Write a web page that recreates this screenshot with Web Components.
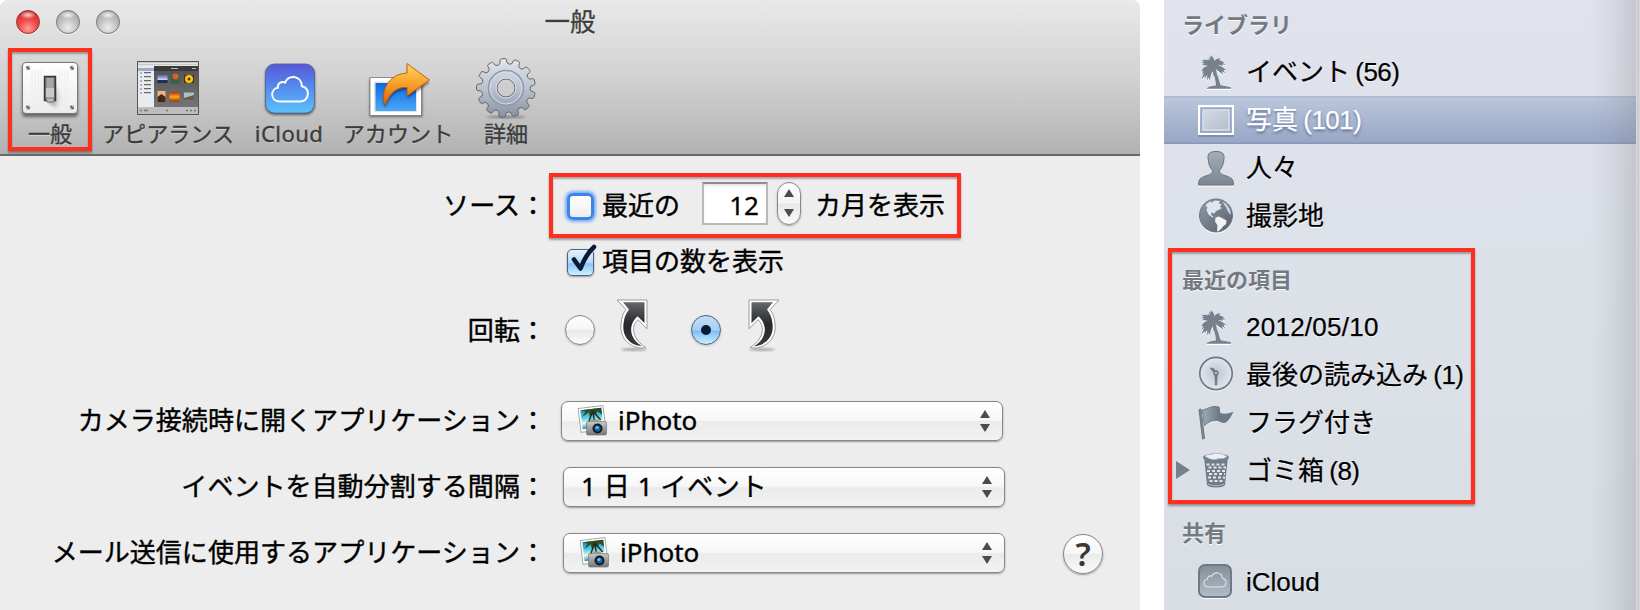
<!DOCTYPE html>
<html lang="ja">
<head>
<meta charset="utf-8">
<title>一般</title>
<style>
html,body{margin:0;padding:0;background:#fff}
body{width:1640px;height:610px;overflow:hidden;font-family:"Noto Sans","Noto Sans CJK JP",sans-serif}
</style>
</head>
<body>
<app-screen></app-screen>
<script>
const define=(name,html,after)=>customElements.define(name,class extends HTMLElement{
  connectedCallback(){
    if(this.shadowRoot)return;
    const t=document.createElement('template');
    t.innerHTML=typeof html==='function'?html(this):html;
    this.attachShadow({mode:'open'}).append(t.content.cloneNode(true));
    if(after)after(this);
  }
});

function gearPath(n,cx,cy,ro,ri){
  let d='';const s=2*Math.PI/n;
  for(let i=0;i<n;i++){
    const a=-Math.PI/2-0.1+i*s;
    const p=(r,o)=>(cx+r*Math.cos(a+o*s)).toFixed(2)+' '+(cy+r*Math.sin(a+o*s)).toFixed(2);
    d+=(i?'L':'M')+p(ri+.6,-.3)+'L'+p(ro-1.4,-.24)+'Q'+p(ro,-.22)+' '+p(ro,-.13)+'L'+p(ro,.13)+'Q'+p(ro,.22)+' '+p(ro-1.4,.24)+'L'+p(ri+.6,.3)+'Q'+p(ri-1.4,.5)+' '+p(ri+.6,.7);
  }
  return d+'Z';
}
const screw=(x,y)=>`<circle cx="${x}" cy="${y}" r="2.4" fill="#b4b4b4"/><path d="M${x-1.4} ${y-1.4}l2.8 2.8" stroke="#444" stroke-width="1.2"/>`;
const cloud='M10.5 38C4.5 38 1 34 1 29.5C1 24.5 4.500 21.500 8.500 21C8 15.500 13 12.500 18 14.500C20.500 9 25.500 7 30 7.500C36.500 8.500 40 13.500 40 19C45.500 20 48 24 48 28.500C48 34 44 38 38.500 38Z';
const palm=`<path d="M14 12C18 16 20 21 22.500 30.500C26 31 30 31.700 33 32.800V34H8.500C9 32.300 13 31 18 30.600C17.500 24 15.500 18 12.500 13Z"/>
<path d="M16.500 10C17 6 16 2.500 12.500 .5L13 3 10.800 2 12 5 9.500 4.500C10 8 12 10 15 12Z"/>
<path d="M15 10C11 5 7 4 3.500 6L6 6.700 3 8.300 6 8.500 4 10.500C8 10 11 11 14 13Z"/>
<path d="M15 11C9 10 4.500 12.500 3.500 17L5.500 16 3.500 20 6 18 3.500 24.500 7.500 21 6.500 24.500C9 20.500 12 16 16 13Z"/>
<path d="M12 13C9.500 17 8.500 21 9.500 26L10.800 22.500 12 26C12 21 14 17 16.500 13Z"/>
<path d="M14 12C15 15 15.500 18 15.500 21.500L17.500 18.500 18.500 20C19 16.500 18 13.500 16.500 11.500Z"/>
<path d="M15 11C17 14 20 16 25 20L24 16.500 27 18.500 25.500 15 28.500 15.500C24.500 11.500 20 9.500 15 10Z"/>
<path d="M14.500 11C17 6 22 4 27 8L24.500 7.800 27.500 10.500 24 9.500 25 11.500C21.500 9.500 19 10.500 16 13Z"/>
<path d="M15 10C15.500 6 18.500 3 23 3.500L21 4.500 23 5.500C19.500 6 18 8 17 11Z"/>`;

const icons={
switch:[64,64,`<defs><linearGradient id="p" x2="0" y2="1"><stop stop-color="#fff"/><stop offset="1" stop-color="#ececec"/></linearGradient><linearGradient id="q"><stop stop-color="#333" stop-opacity=".6"/><stop offset="1" stop-color="#888" stop-opacity="0"/></linearGradient><filter id="b"><feGaussianBlur stdDeviation="1.5"/></filter></defs>
<rect x="4" y="8" width="56" height="53" rx="4" fill="#000" opacity=".45" filter="url(#b)"/><rect x="4.500" y="6.500" width="55" height="51" rx="3.500" fill="url(#p)" stroke="#777"/>
${[14,17,20,23,41,44,47,50].map(x=>`<path d="M${x} 14v36" stroke="#ececec"/>`).join('')}${screw(10,12)+screw(54,12)+screw(10,51.500)+screw(54,51.500)}
<path d="M36 28l8 14-6 10-8-6z" fill="url(#q)" filter="url(#b)"/><rect x="26.500" y="20.500" width="11" height="24" fill="#777" stroke="#383838" stroke-width="1.500"/><rect x="28.500" y="22" width="7" height="10" fill="#a8a8a8"/><path d="M28 32h8v10h-8z" fill="#c8c8c8"/><path d="M28 42h8v4h-7z" fill="#bbb" stroke="#666" stroke-width=".8"/>`],
window:[64,64,`<defs><linearGradient id="d" x2="0" y2="1"><stop stop-color="#555"/><stop offset="1" stop-color="#747474"/></linearGradient><linearGradient id="s1" x2="0" y2="1"><stop stop-color="#3f67c4"/><stop offset=".6" stop-color="#e2d3e8"/><stop offset=".65" stop-color="#203050"/></linearGradient><linearGradient id="s2" x2="0" y2="1"><stop stop-color="#d03010"/><stop offset=".5" stop-color="#ffab12"/><stop offset="1" stop-color="#a82b0c"/></linearGradient></defs>
<rect x="1" y="5" width="62" height="54" fill="#555"/><rect x="2" y="6" width="60" height="5" fill="#c9c9c9"/><path d="M2 7.500h60M2 9.500h60" stroke="#eee" stroke-width=".7"/><rect x="2" y="10" width="16" height="41" fill="#e8ebef"/><rect x="2" y="12" width="16" height="3" fill="#98add0"/>
<g fill="#b0b0b0">${[16,20,24,28,32,36].map(y=>`<rect x="4" y="${y}" width="2" height="2"/><rect x="8" y="${y}" width="7" height="1.200" fill="#666"/>`).join('')}</g>
<rect x="18" y="10" width="44" height="5" fill="#3a3a3a"/><path d="M35 12.500h7M56 12.500h4" stroke="#bbb"/><rect x="18" y="15" width="44" height="36" fill="url(#d)"/>
<rect x="21.500" y="19" width="10" height="8" fill="url(#s1)"/><rect x="35" y="17" width="8.500" height="11" fill="#38624c"/><circle cx="39.500" cy="20.500" r="3" fill="#e65a28"/><rect x="48" y="19" width="10" height="8" fill="#503005"/><circle cx="53" cy="23" r="4" fill="#f5c614"/><circle cx="53" cy="23" r="1.500" fill="#5d2b07"/>
<rect x="21.500" y="35" width="8" height="11" fill="#efb27c"/><path d="M21.500 41l4-3 4 3v5h-8z" fill="#46270f"/><rect x="33.500" y="36.500" width="10" height="9" fill="url(#s2)"/><rect x="48" y="36.500" width="10" height="8" fill="#a8c2bd"/><path d="M48 42l10-3v5.500H48z" fill="#6b5a4e"/>
<rect x="2" y="51" width="60" height="7" fill="#bdbdbd"/><path d="M4 54.500h2m2 0h4m18 0h2m18 0h2m2 0h2m2 0h2" stroke="#777" stroke-width="1.600"/>`],
icloud:[64,64,`<defs><linearGradient id="p" x2="0" y2="1"><stop stop-color="#5657d6"/><stop offset=".5" stop-color="#558df0"/><stop offset="1" stop-color="#5ac2f8"/></linearGradient><filter id="b"><feGaussianBlur stdDeviation="1"/></filter></defs><g transform="translate(1 0)"><rect x="7" y="9" width="50" height="50" rx="9" opacity=".5" filter="url(#b)"/><rect x="7.500" y="8" width="49" height="49" rx="9" fill="url(#p)" stroke="#4b6698" stroke-width=".8"/><g transform="translate(13.400 15) scale(.76 .8)"><path d="${cloud}" fill="none" stroke="#fff" stroke-width="2.500"/></g></g>`],
account:[64,64,`<defs><linearGradient id="p" x2="0" y2="1"><stop stop-color="#0c69df"/><stop offset="1" stop-color="#4ca8f8"/></linearGradient><linearGradient id="o" x2="0" y2="1"><stop stop-color="#ffda5a"/><stop offset=".55" stop-color="#f69a26"/><stop offset="1" stop-color="#d95f05"/></linearGradient><filter id="b"><feGaussianBlur stdDeviation=".8"/></filter></defs><g transform="translate(.5 1)">
<rect x="3" y="22" width="53" height="38" opacity=".45" filter="url(#b)"/><rect x="3.500" y="20.500" width="51.500" height="38" fill="#fff" stroke="#777" stroke-width=".8"/><rect x="7.500" y="24.500" width="43" height="30.500" fill="#e4e4e4"/><rect x="9" y="26" width="40.500" height="28" fill="url(#p)"/>
<path d="M41 7L63 24 41 39.500V31C31 30.500 24 35 19.500 48 C17 48 16.500 44 17 39C18.500 26 28 17 41 16z" fill="#000" opacity=".4" transform="translate(0 2)" filter="url(#b)"/><path d="M40.500 6.500L63 23 40.500 39V30.500C31 30 24 34.500 19 47.500 C17 46 16.500 42 17 38C18.500 25 28 16.500 40.500 16z" fill="url(#o)" stroke="#b65715" stroke-width=".9"/></g>`],
gear:[64,64,`<defs><linearGradient id="p" x2="0" y2="1"><stop stop-color="#e1e5ed"/><stop offset=".5" stop-color="#bbc3d0"/><stop offset="1" stop-color="#8790a4"/></linearGradient><linearGradient id="h" x2="0" y2="1"><stop stop-color="#c6c6c6"/><stop offset="1" stop-color="#bdbdbd"/></linearGradient><filter id="b"><feGaussianBlur stdDeviation="1.5"/></filter></defs><ellipse cx="32" cy="61" rx="20" ry="1.500" opacity=".35" filter="url(#b)"/><path fill-rule="evenodd" d="${gearPath(13,32,32,29.500,24.500)}M41 32a9 9 0 1 0-18 0a9 9 0 1 0 18 0z" fill="url(#p)" stroke="#666" stroke-width="1"/><circle cx="32" cy="32" r="17.500" fill="none" stroke="#8f99aa" stroke-width="1.500"/><circle cx="32" cy="32" r="16" fill="none" stroke="#d6dde8"/><circle cx="32" cy="32" r="10" fill="none" stroke="#d9dfe7"/>`],
iphoto:[32,34,`<defs><linearGradient id="p" x2="0" y2="1"><stop stop-color="#1687b8"/><stop offset=".45" stop-color="#56d5f0"/><stop offset=".7" stop-color="#fff3dc"/><stop offset="1" stop-color="#0e9ac4"/></linearGradient><linearGradient id="c" x2="0" y2="1"><stop stop-color="#c8c8c8"/><stop offset="1" stop-color="#777"/></linearGradient></defs><g transform="translate(-.5 -1)"><g transform="rotate(-7 14 16)"><rect x="2" y="4" width="25" height="24" fill="#fff" stroke="#999" stroke-width=".8"/><rect x="4" y="6" width="21" height="19" fill="url(#p)"/><path d="M5 6h20v7l-4-4-3 4-2-3-3 5-1-6-7 4 4-5z" fill="#344a1d"/><path d="M16 8l-7 15M16 8l1 15M16 8l7 10" stroke="#24301b" stroke-width="1.500"/></g><rect x="9" y="18.500" width="20" height="13.500" rx="1.500" fill="url(#c)" stroke="#777" stroke-width=".7"/><path d="M13 18.500l1-2h7l1 2" fill="#999"/><circle cx="20" cy="25.500" r="5" fill="#17191c"/><circle cx="20" cy="25.500" r="3" fill="#0c6aa2"/><circle cx="19.500" cy="24.500" r="1.500" fill="#5ac4ef"/></g>`],
palm:[36,36,`<g fill="#fff" transform="translate(0 2)">${palm}</g><g fill="#76818d" transform="translate(0 .8)">${palm}</g>`],
frame:[36,36,`<defs><linearGradient id="p" x1="0" y1="0" x2="1" y2="1"><stop stop-color="#d5dae5"/><stop offset="1" stop-color="#b4bccb"/></linearGradient></defs><path d="M0 34h36" stroke="#7585a4" stroke-width="1.500"/><rect x="1" y="4" width="34" height="28" fill="none" stroke="#fff" stroke-width="2"/><rect x="3.500" y="6.500" width="29" height="23" fill="#a3b0c9" stroke="#95a4c3"/><rect x="5" y="8" width="26" height="20" fill="url(#p)" stroke="#d0d7e5" stroke-width="2"/>`],
person:[36,36,`<defs><linearGradient id="p" x2="0" y2="1"><stop stop-color="#a4adb8"/><stop offset="1" stop-color="#7c8793"/></linearGradient></defs><path d="M0 36h36" stroke="#fff"/><path d="M.5 35c0-6 2-7 7-9 4-1.300 7-2 7-5.500-3-3.500-4-7-4.400-12C9.500 3.500 12 1.500 18 1.500s8.500 2 8 7C25.500 13.500 24.500 17 21.500 20.500c0 3.500 3 4.200 7 5.500 5 2 7 3 7 9z" fill="url(#p)" stroke="#687480"/>`],
globe:[36,36,`<defs><linearGradient id="p" x2="1" y2="1"><stop stop-color="#929ba6"/><stop offset="1" stop-color="#55606c"/></linearGradient></defs><circle cx="18" cy="18.500" r="17" fill="#fff"/><circle cx="18" cy="17.500" r="16.500" fill="url(#p)" stroke="#697583"/><path d="M9 5.500L12 3.500 14 4.500 17 2.500 22 3 20.500 5.500 23.500 6 22 9 24 10 20.500 12 18 13 16.500 15.500 13.500 14.500 13 17 15.500 18.500 14.500 19.500 10.500 16.500 8.500 12 9.500 9 7.500 8Z" fill="#e2e6ec"/><path d="M17.500 19.500L21 18.500 24 20 28.500 22.500 28 26 25 28.500 23 31 20 33.500 19 32.500 19.500 27.500 17 23.500Z" fill="#f0f2f5"/><path d="M24.500 3.500L28 5.500 32 11 33 16.500C29.500 15.500 29 9.500 26.500 7.500Z" fill="#c9cfd8"/>`],
clock:[36,36,`<defs><radialGradient id="p"><stop stop-color="#bec6cf"/><stop offset="1" stop-color="#e2e6eb"/></radialGradient></defs><g transform="translate(0 -1)"><circle cx="18" cy="18.500" r="16.500" fill="none" stroke="#fff"/><circle cx="18" cy="17.500" r="16.200" fill="url(#p)" stroke="#6c7986" stroke-width="1.700"/><path d="M16 16.500l-4-4.500 3.500.5 2.500 3.500M17 19l.3 10h1.400l.5-10z" fill="#6c7986" stroke="#6c7986" stroke-width=".8"/><circle cx="18" cy="17" r="1.800" fill="#d7dde4" stroke="#6c7986" stroke-width="1.700"/></g>`],
flag:[36,36,`<defs><linearGradient id="p"><stop stop-color="#a2acb9"/><stop offset="1" stop-color="#647280"/></linearGradient></defs><g transform="translate(0 -1)"><path d="M1 5.500l2-.5 3.500 29.500-2 .5z" fill="#7a8692" stroke="#6c7986"/><path d="M4.500 6C10 5 14 1 21 3L23 17C16 15 11 17 6.500 21.500Z" fill="url(#p)" stroke="#6c7986"/><path d="M22 9C27 10.500 31 9.500 35.500 7.500 33.500 12 31.500 16 28 18.500 25.500 19.500 22.500 18.500 20.500 17Z" fill="#6c7986"/></g>`],
trash:[36,36,`<g transform="translate(0 -.5)"><path d="M6 4l3 28q.5 3 9 3t9-3l3-28z" fill="#707d89"/><ellipse cx="18" cy="5" rx="13" ry="4" fill="#717d89"/><path d="M7 4q2-3 6-2 3-2 8-1 4 0 8 3-3 3-8 2-6 3-14-2z" fill="#edf0f3" stroke="#abb4be" stroke-width=".7"/><g stroke="#e2e6eb" stroke-width="2" stroke-dasharray="3 2"><path d="M8.500 12H28M10.500 15H28M9 18.500H27.500M11 21.500H27M10 25H27M11.500 28.500H26"/></g><path d="M10 32q8 3 16 0" fill="none" stroke="#b2bac3"/></g>`],
cloudgray:[36,36,`<defs><linearGradient id="p" x2="0" y2="1"><stop stop-color="#838e99"/><stop offset="1" stop-color="#b4bcc5"/></linearGradient></defs><g transform="translate(0 -1)"><rect x="1" y="3" width="32" height="33" rx="6" fill="#fff"/><rect x="1" y="2" width="32" height="32" rx="6" fill="url(#p)" stroke="#6c7986" stroke-width="2"/><g transform="translate(5.500 6.500) scale(.47 .46)"><path d="${cloud}" fill="none" stroke="#dfe4ea" stroke-width="2.300"/></g></g>`]
};

define('glyph-icon',el=>{
  const [w,h,m]=icons[el.getAttribute('name')];
  return `<style>:host{display:block;flex:none;width:${w}px;height:${h}px}svg{display:block;overflow:visible}</style><svg width="${w}" height="${h}" viewBox="0 0 ${w} ${h}">${m}</svg>`;
});

define('traffic-lights',`<style>
:host{display:flex;gap:16px;padding:10px 0 0 16px}
i{box-sizing:border-box;width:24px;height:24px;border-radius:50%;border:1.500px solid #777;background:radial-gradient(ellipse 8px 4px at 50% 18%,rgba(255,255,255,.85),transparent),radial-gradient(circle at 50% 75%,#eee 0,#c2c2c2 45%,#989898 100%);box-shadow:0 1px 0 #eee}
i.r{border-color:#9a2f2f;background:radial-gradient(ellipse 8px 4px at 50% 18%,rgba(255,255,255,.8),transparent),radial-gradient(circle at 50% 80%,#ff9c98 0,#f04848 45%,#c02228 100%)}
</style><i class="r"></i><i></i><i></i>`);

define('tool-item',el=>`<style>
:host{display:flex;flex-direction:column;align-items:center;width:var(--w);flex:none;color:#3b3b3b;font-size:22.100px;line-height:28px;white-space:nowrap;text-shadow:0 1px 0 rgba(255,255,255,.45);-webkit-text-stroke:.35px #3b3b3b}
span{margin-top:-1px;letter-spacing:var(--ls,0)}
</style><glyph-icon name="${el.getAttribute('icon')}"></glyph-icon><span><slot></slot></span>`);

define('title-bar',`<style>
:host{display:block;box-sizing:border-box;height:156px;border-bottom:2px solid #68686a;background:linear-gradient(#e9e9e9,#d2d2d2 50%,#b2b2b2)}
header{display:grid;grid-template-columns:1fr auto 1fr;height:56px}
h1{margin:0;padding-top:5px;font-weight:400;font-size:25.500px;line-height:32px;color:#3c3c3c;text-shadow:0 1px 0 #fff;-webkit-text-stroke:.35px #3c3c3c}
nav{display:flex}
</style><header><traffic-lights></traffic-lights><h1>一般</h1></header>
<nav><tool-item icon="switch" style="--w:100px">一般</tool-item><tool-item icon="window" style="--w:136px">アピアランス</tool-item><tool-item icon="icloud" style="--w:106px;--ls:.4px">iCloud</tool-item><tool-item icon="account" style="--w:112px">アカウント</tool-item><tool-item icon="gear" style="--w:104px">詳細</tool-item></nav>`);

define('form-row',el=>`<style>
:host{display:flex;align-items:center;height:var(--h)}
label{width:546px;flex:none;text-align:right;white-space:nowrap;font-size:26.050px;line-height:36px;margin-top:-2px;-webkit-text-stroke:.4px #000}
.c{display:flex;align-items:center;flex:1}
</style><label>${el.getAttribute('label')||''}</label><div class="c"><slot></slot></div>`);

define('check-box',el=>`<style>
:host{display:block;flex:none;position:relative;box-sizing:border-box;width:27px;height:27px;border-radius:5px;border:1px solid #888;background:linear-gradient(#fff,#eee)}
:host([focused]){border:3.500px solid #3c84ea;border-radius:6px;box-shadow:0 0 3px 2px #79aef3}
:host([checked]){border-color:#4c6285;background:linear-gradient(#e6f1fb,#b9d9f6 50%,#8cc4f4 55%,#cdf0ff);box-shadow:0 1px 2px #999}
svg{position:absolute;left:0;top:-6px;overflow:visible}
</style>${el.hasAttribute('checked')?'<svg width="32" height="30"><path d="M6 15.500l6.500 9Q18 10 26 3" fill="none" stroke="#061c36" stroke-width="4.600" stroke-linecap="round" stroke-linejoin="round"/></svg>':''}`);

define('radio-dot',`<style>
:host{display:grid;place-items:center;flex:none;box-sizing:border-box;width:30px;height:30px;border-radius:50%;border:1px solid #858585;background:linear-gradient(#fff,#f5f5f5 50%,#e8e8e8 52%,#fcfcfc);box-shadow:0 1px 2px #bbb}
:host([checked]){border-color:#4c6285;background:linear-gradient(#c5dcf3,#a5cff4 50%,#7fbdf3 54%,#c9f1ff)}
i{display:none;width:10px;height:10px;border-radius:50%;background:#061c36}
:host([checked]) i{display:block}
</style><i></i>`);

define('rotate-arrow',`<style>
:host{display:block;flex:none;width:32px;height:52px}
:host([flip]) svg{transform:scaleX(-1)}
svg{display:block;overflow:visible}
</style><svg width="32" height="52" viewBox="0 0 32 54" preserveAspectRatio="none"><defs><linearGradient id="g" x2="0" y2="1"><stop stop-color="#66676b"/><stop offset=".5" stop-color="#26272b"/><stop offset="1" stop-color="#3a3b3f"/></linearGradient><filter id="b"><feGaussianBlur stdDeviation="1"/></filter></defs><ellipse cx="18" cy="52.500" rx="13" ry="1.500" opacity=".3" filter="url(#b)"/><path d="M1 1H31V31L22 21.500C14 29 17 42 30 50.500 16 53 3 42 5 26 5.500 19 7 15 10 11Z" fill="#fff" stroke="#999" stroke-width="1"/><path d="M7 3.500H28.500V25L21.500 18C12 27 13 41 26 49 13 48 6 38 7.500 26 8 19.500 10 15 13 11Z" fill="url(#g)"/></svg>`);

define('number-field',`<style>
:host{display:block;flex:none;box-sizing:border-box;width:66px;height:43px;border:2px solid #b9b9b9;border-top-color:#8d8d8d;background:#fff;box-shadow:inset 0 2px 2px #e6e6e6;font-size:26px;line-height:43px;text-align:right;padding-right:7px;-webkit-text-stroke:.3px #000}
</style><slot></slot>`);

define('num-stepper',`<style>
:host{display:flex;flex:none;flex-direction:column;align-items:center;justify-content:center;gap:12px;box-sizing:border-box;width:24px;height:43px;border:1.500px solid #888;border-radius:12px;background:linear-gradient(#fff,#f4f4f4 48%,#e7e7e7 51%,#fbfbfb);box-shadow:0 1px 2px #aaa}
i{border:5px solid transparent;border-top:0;border-bottom:8px solid #4b4b4b}
i+i{border-bottom:0;border-top:8px solid #4b4b4b}
</style><i></i><i></i>`);

define('pop-up',el=>`<style>
:host{display:flex;align-items:center;flex:none;box-sizing:border-box;width:442px;height:40px;border:1px solid #868686;border-radius:7px;background:linear-gradient(#fff,#f7f7f7 48%,#ebebeb 52%,#f2f2f2);box-shadow:0 1px 2px #999;padding:0 12.500px 0 16px}
span{flex:1;font-size:26px;line-height:36px;white-space:nowrap;margin:-2px 0 0 var(--tx,8px);letter-spacing:var(--ls,0);-webkit-text-stroke:.4px #000}
.ar{display:flex;flex-direction:column;gap:6px;margin-top:-1px}
i{border:5px solid transparent;border-top:0;border-bottom:8px solid #4b4b4b}
i+i{border-bottom:0;border-top:8px solid #4b4b4b}
</style>${el.hasAttribute('photo')?'<glyph-icon name="iphoto"></glyph-icon>':''}<span><slot></slot></span><div class="ar"><i></i><i></i></div>`);

define('help-button',`<style>
:host{display:grid;place-items:center;box-sizing:border-box;width:40px;height:40px;border-radius:50%;border:1px solid #888;background:linear-gradient(#fff,#f6f6f6 48%,#ebebeb 52%,#fbfbfb);box-shadow:0 1px 2px #999;font-size:33px;line-height:38px;font-weight:600;color:#383838}
</style><slot></slot>`);

define('pref-window',`<style>
:host{display:block;width:1140px;height:610px;flex:none;background:#ededed;border-radius:8px 8px 0 0;overflow:hidden;color:#000}
form{padding-top:25px;margin:0}
.t{font-size:26px;line-height:36px;white-space:nowrap;margin-top:-2px;-webkit-text-stroke:.4px #000}
</style><title-bar></title-bar><form>
<form-row label="ソース：" style="--h:50px"><check-box focused style="margin-left:21px;margin-top:1px"></check-box><span class="t" style="margin-left:8px;width:100px">最近の</span><number-field style="margin-top:-5px">12</number-field><num-stepper style="margin-left:9px;margin-top:-6px"></num-stepper><span class="t" style="margin-left:14px">カ月を表示</span></form-row>
<form-row style="--h:62px"><check-box checked style="margin-left:21px;margin-top:1px"></check-box><span class="t" style="margin-left:8px">項目の数を表示</span></form-row>
<form-row label="回転：" style="--h:76px;margin-bottom:19px"><radio-dot style="margin-left:19px;margin-top:-2px"></radio-dot><rotate-arrow style="margin:-13px 0 0 21px"></rotate-arrow><radio-dot checked style="margin-left:43px;margin-top:-2px"></radio-dot><rotate-arrow flip style="margin:-13px 0 0 27px"></rotate-arrow></form-row>
<form-row label="カメラ接続時に開くアプリケーション：" style="--h:66px"><pop-up photo style="margin-left:15px">iPhoto</pop-up></form-row>
<form-row label="イベントを自動分割する間隔：" style="--h:66px"><pop-up style="margin-left:17px;--tx:1px;--ls:.6px">1 日 1 イベント</pop-up></form-row>
<form-row label="メール送信に使用するアプリケーション：" style="--h:66px"><pop-up photo style="margin-left:17px">iPhoto</pop-up><help-button style="margin-left:58px;margin-top:1px">?</help-button></form-row>
</form>`);

define('side-heading',`<style>
:host{display:block;box-sizing:border-box;height:48px;padding-left:18px;font-family:"Liberation Sans","Noto Sans CJK JP",sans-serif;font-size:22px;line-height:48px;font-weight:700;color:#737980;text-shadow:0 1px 0 #fff}
div{padding-top:var(--dy,2px)}
</style><div><slot></slot></div>`);

define('side-item',el=>`<style>
:host{display:flex;align-items:center;box-sizing:border-box;height:48px;padding-left:12px;font-family:"Liberation Sans","Noto Sans CJK JP",sans-serif;font-size:26px;line-height:36px;color:#000;text-shadow:0 1px 0 #fff;white-space:nowrap;word-spacing:-1.500px;-webkit-text-stroke:.25px currentColor}
:host([selected]){color:#fff;text-shadow:0 2px 3px #56688c;background:linear-gradient(#acbad3 0,#acbad3 1px,#bac6dc 2px,#99a7c6 46px,#8998b9 47px)}
b{width:14px;height:18px;margin-right:8px;flex:none}
b.on{background:#75818f;clip-path:polygon(0 0,100% 50%,0 100%);position:relative;top:-1px}
span{margin-left:12px}
::slotted(i){font-style:normal;letter-spacing:-.5px}
</style><b class="${el.hasAttribute('arrow')?'on':''}"></b><glyph-icon name="${el.getAttribute('icon')}"></glyph-icon><span><slot></slot></span>`);

define('side-bar',`<style>
:host{display:block;position:relative;box-sizing:border-box;width:472px;height:610px;flex:none;background:linear-gradient(#e0e3eb,#d9dee5)}
:host::after{content:"";position:absolute;inset:0 0 0 auto;width:46px;background:linear-gradient(90deg,rgba(120,124,130,0),rgba(120,124,130,.1) 50%,rgba(120,124,130,.27))}
</style>
<side-heading>ライブラリ</side-heading>
<side-item icon="palm">イベント<i> (56)</i></side-item><side-item icon="frame" selected>写真<i> (101)</i></side-item><side-item icon="person">人々</side-item><side-item icon="globe">撮影地</side-item>
<side-heading style="margin-top:15px">最近の項目</side-heading>
<side-item icon="palm" style="letter-spacing:.25px">2012/05/10</side-item><side-item icon="clock">最後の読み込み<i> (1)</i></side-item><side-item icon="flag">フラグ付き</side-item><side-item icon="trash" arrow>ゴミ箱<i> (8)</i></side-item>
<side-heading style="margin-top:15px;--dy:0px">共有</side-heading>
<side-item icon="cloudgray">iCloud</side-item>`);

define('red-frame',`<style>
:host{display:block;position:absolute;box-sizing:border-box;border:4px solid #ff2f1f;box-shadow:0 2px 2px rgba(0,0,0,.35),inset 0 2px 2px rgba(0,0,0,.3)}
</style>`);

define('app-screen',`<style>
:host{display:flex;position:relative;width:1640px;height:610px;overflow:hidden;background:#fff}
side-bar{margin-left:24px}
.edge{flex:1;background:linear-gradient(90deg,#dcdcdc,#c9c9c9 50%,#dcdcdc)}
</style><pref-window></pref-window><side-bar></side-bar><div class="edge"></div>
<red-frame style="left:8px;top:48px;width:84px;height:103px"></red-frame>
<red-frame style="left:549px;top:173px;width:412px;height:65px"></red-frame>
<red-frame style="left:1168px;top:248px;width:307px;height:256px"></red-frame>`);
</script>
</body>
</html>
